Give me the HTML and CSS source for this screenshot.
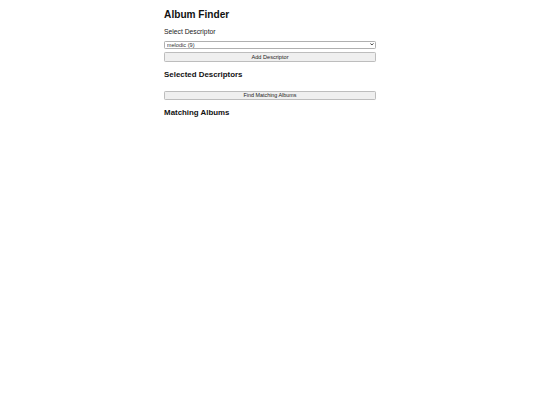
FILE: index.html
```html
<!DOCTYPE html>
<html>
<head>
<meta charset="utf-8">
<link rel="stylesheet" href="styles.css">
<title>Album Finder</title>
</head>
<body>
<div class="page">
  <div class="app">
    <h1 class="title">Album Finder</h1>
    <label class="label" for="desc">Select Descriptor</label>
    <div class="select-wrap">
      <select class="select" id="desc">
        <option>melodic (9)</option>
      </select>
      <svg class="chevron" viewBox="0 0 8 5" width="9" height="6"><path d="M0.8 0.8 L4 4 L7.2 0.8" fill="none" stroke="#333" stroke-width="2"/></svg>
    </div>
    <button class="btn btn-add">Add Descriptor</button>
    <h3 class="subtitle sel-title">Selected Descriptors</h3>
    <ul class="selected"></ul>
    <button class="btn btn-find">Find Matching Albums</button>
    <h3 class="subtitle match-title">Matching Albums</h3>
    <div class="results"></div>
  </div>
</div>
</body>
</html>
```
FILE: styles.css
```css
html, body {
  margin: 0;
  padding: 0;
  background: #ffffff;
}
body {
  font-family: "Liberation Sans", Arial, sans-serif;
  color: #000;
}
.page {
  zoom: 0.421875;
  width: 1280px;
}
.app {
  width: 502px;
  margin: 0 auto;
  padding-top: 21px;
  display: flex;
  flex-direction: column;
}
.title {
  margin: 0;
  font-size: 24px;
  line-height: 28px;
  font-weight: bold;
  color: #111;
}
.label {
  margin-top: 18px;
  font-size: 16px;
  line-height: 18px;
  color: #222;
}
.select-wrap {
  position: relative;
  margin-top: 12px;
  height: 18px;
}
.select {
  -webkit-appearance: none;
  appearance: none;
  display: block;
  margin: 0;
  width: 100%;
  height: 18px;
  box-sizing: border-box;
  padding: 0 0 0 4px;
  font-family: "Liberation Sans", Arial, sans-serif;
  font-size: 13.33px;
  line-height: 16px;
  color: #333;
  background: #fff;
  border: 1px solid #b0b0b0;
  border-radius: 3px;
}
.chevron {
  position: absolute;
  right: 4px;
  top: 6px;
  pointer-events: none;
}
.btn {
  -webkit-appearance: none;
  appearance: none;
  display: block;
  width: 100%;
  height: 22px;
  box-sizing: border-box;
  padding: 0;
  font-family: "Liberation Sans", Arial, sans-serif;
  font-size: 13.33px;
  color: #222;
  background: #efefef;
  border: 1px solid #bdbdbd;
  border-radius: 3px;
}
.btn-add {
  margin-top: 9px;
}
.subtitle {
  margin: 0;
  font-size: 18.72px;
  line-height: 22px;
  font-weight: bold;
  color: #111;
}
.sel-title {
  margin-top: 20.6px;
}
.selected {
  margin: 0;
  padding: 0;
  height: 26.4px;
  list-style: none;
}
.btn-find {
  height: 21.4px;
  font-size: 12.8px;
}
.match-title {
  margin-top: 20.2px;
}
```
